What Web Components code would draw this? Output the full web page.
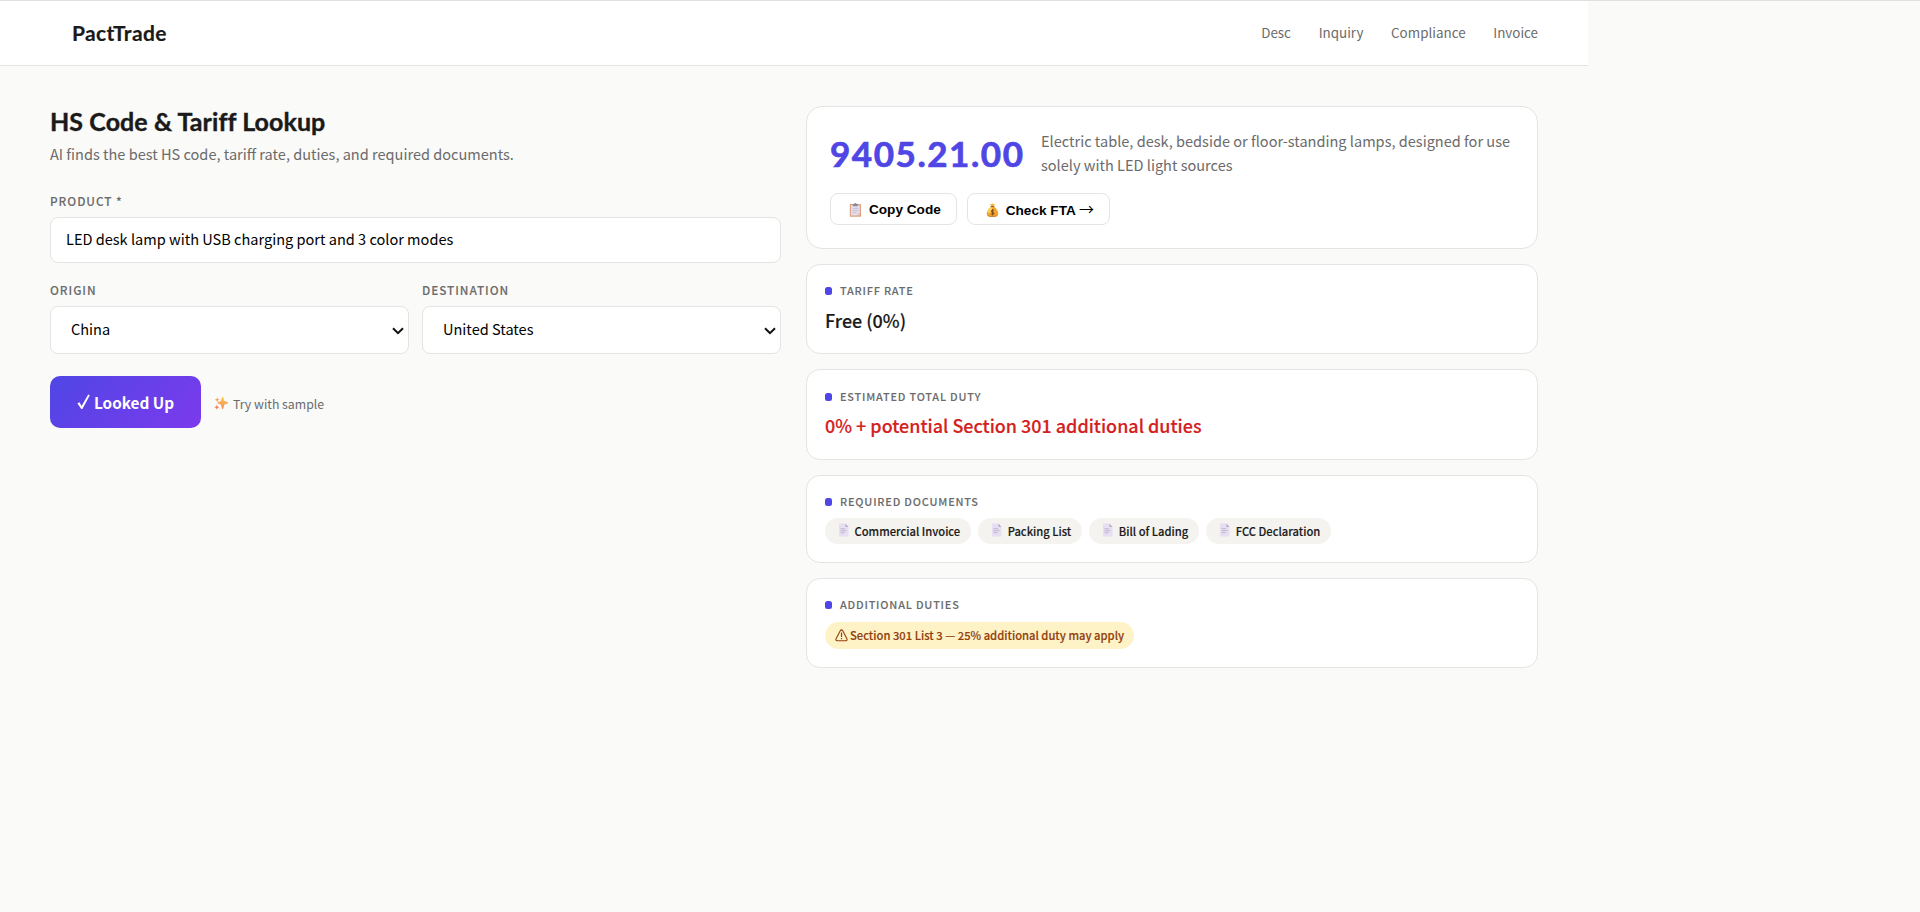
<!DOCTYPE html>
<html lang="en">
<head>
<meta charset="utf-8">
<title>PactTrade</title>
<style>
    body {
        margin: 0;
        min-height: 100vh;
        box-sizing: border-box;
        border-top: 1px solid #e0e0de;
        background: #fafaf8;
        color: #1a1a1a;
        font-family: "Noto Sans CJK SC", "Open Sans", sans-serif;
        font-size: 14.56px;
        line-height: 24px;
    }
</style>
</head>
<body>
<trade-app></trade-app>

<script>
const define = (name, html) => {
    const template = document.createElement('template');
    template.innerHTML = html;
    customElements.define(name, class extends HTMLElement {
        constructor() {
            super();
            this.attachShadow({ mode: 'open' });
            this.shadowRoot.appendChild(template.content.cloneNode(true));
        }
    });
};

const icons = {
    check: '<svg viewBox="0 0 13 16"><path d="M0.4 9.3 2.4 8.2 4.6 12 11.2 0.6 12.8 1.3 5.4 15H4.2Z" fill="#fff"/></svg>',
    chevron: '<svg viewBox="0 0 12 8"><path d="M1 1.2 6 6.2 11 1.2" fill="none" stroke="#111" stroke-width="2"/></svg>',
    sparkles: `<svg viewBox="0 0 14 14">
        <defs><linearGradient id="g" x1="0" y1="0" x2="0" y2="1"><stop offset="0" stop-color="#fbc94a"/><stop offset="1" stop-color="#f58a5c"/></linearGradient></defs>
        <path d="M8.6 1 9.9 5.3 14 6.8 9.9 8.3 8.6 13 7.3 8.3 3.6 6.8 7.3 5.3Z" fill="url(#g)" stroke="url(#g)" stroke-linejoin="round"/>
        <path d="M3.2 1.2 3.9 3 5.6 3.7 3.9 4.4 3.2 6 2.5 4.4.8 3.7 2.5 3Z" fill="#f7a35a"/>
        <path d="M2.8 8.7 3.6 10.5 5.4 11.2 3.6 12 2.8 13.8 2 12 .2 11.2 2 10.5Z" fill="#f4835f"/></svg>`,
    clipboard: `<svg viewBox="0 0 12 14">
        <rect x=".3" y="1" width="11.2" height="12.8" rx=".6" fill="#dda080"/>
        <path d="M1.4 2.2h9v7.6L7.800 12.600H1.400Z" fill="#e2dced"/><path d="M10.400 9.800v2.800H7.800Z" fill="#f3c0a0"/>
        <path d="M3.500 1.100h1.300a1.100 1.100 0 0 1 2.200 0h1.300v2.200H3.500Z" fill="#8d8798"/>
        <path d="M3 5.600h6M3 7.600h6M3 9.600h4" stroke="#c5bdd2" stroke-width=".8"/></svg>`,
    money: `<svg viewBox="0 0 13 14">
        <path d="m4 .8 1.400.5L6.500.2l1.200 1.100L9 .8 8 3H5Z" fill="#f6b73c"/><path d="M4.800 3h3.500v1.100H4.800Z" fill="#9d5b2c"/>
        <path d="M4.800 4h3.500c2 1.500 4 4 4 6.500 0 2.400-1.600 3.300-5.800 3.300S.7 12.900.7 10.500C.7 8 2.800 5.500 4.800 4Z" fill="#f1a52f"/>
        <path d="M1.500 8.500C2.300 6.500 3.500 5 5.200 4.200c1.500 1 1.800 3-.2 4.800s-3 1-3.500-.5Z" fill="#ffd056"/>
        <path d="M1 12c2.600 1.200 8.600 1.200 11 0-.7 1.400-2.400 1.800-5.500 1.800S1.600 13.400 1 12Z" fill="#c7712d"/>
        <path d="M8 7.600C7.700 7 5.200 6.800 5.200 8.200S8 9 8 10.400 5.500 11.400 5 10.600M6.600 6.300v6" fill="none" stroke="#75451c" stroke-width="1"/></svg>`,
    page: `<svg viewBox="0 0 10 14">
        <path d="M0 .5h6.500L9.500 4v9.500H0Z" fill="#e6def1"/><path d="M6.500.5 9.500 4h-3Z" fill="#b8acc6"/>
        <path d="M1.500 5.700H6M1.500 7.700h6M1.500 9.700h4" stroke="#c0b4cf" stroke-width="1"/></svg>`,
    warning: `<svg viewBox="0 0 13 13" fill="none" stroke="#92400e">
        <path d="M6.500.9c.5 0 .8.2 1.100.7l4.300 8.200c.6 1.100 0 1.900-1.100 1.900H2.200c-1.100 0-1.700-.8-1.100-1.900l4.300-8.200c.3-.5.600-.7 1.100-.7Z" stroke-width="1.100"/>
        <path d="M6.500 3.600v4.300M6.500 9v1.300" stroke-width="1.200"/></svg>`,
};

class UiIcon extends HTMLElement {
    constructor() {
        super();
        this.attachShadow({ mode: 'open' });
    }

    connectedCallback() {
        this.shadowRoot.innerHTML = `
          <style>
            :host { display: inline-block; flex: none; line-height: 0; }
            svg { display: block; width: 100%; height: 100%; }
          </style>
          ${icons[this.getAttribute('name')]}
        `;
    }
}
customElements.define('ui-icon', UiIcon);

define('app-header', `
  <style>
    :host {
        display: flex;
        align-items: center;
        justify-content: space-between;
        box-sizing: border-box;
        width: 1588px;
        height: 65px;
        padding: 0 50px 0 72px;
        background: #fff;
        border-bottom: 1px solid #e4e4e2;
    }

    .logo {
        font: 700 21px/26px Lato, sans-serif;
        letter-spacing: 0.38px;
        -webkit-text-stroke: 0.2px;
    }

    nav {
        display: flex;
        gap: 27.7px;
        padding-bottom: 2px;
        color: #6b6b6b;
        font-size: 13.4px;
    }
  </style>
  <div class="logo">PactTrade</div>
  <nav><span>Desc</span><span>Inquiry</span><span>Compliance</span><span>Invoice</span></nav>
`);

define('form-field', `
  <style>
    :host { display: block; }

    .label {
        margin-bottom: 6px;
        color: #6b6b6b;
        font-size: 11.8px;
        font-weight: 500;
        line-height: 20px;
        letter-spacing: 0.95px;
        -webkit-text-stroke: 0.1px;
    }

    ::slotted(input) {
        display: block;
        box-sizing: border-box;
        width: 100%;
        height: 46px;
        margin: 0;
        padding: 0 15px 3px;
        border: 1px solid #e4e4e2;
        border-radius: 8px;
        background: #fff;
        color: #000;
        font-family: inherit;
        font-size: 14.56px;
        outline: none;
    }
  </style>
  <div class="label"><slot name="label"></slot></div>
  <slot></slot>
`);

define('select-box', `
  <style>
    :host {
        display: flex;
        align-items: center;
        justify-content: space-between;
        box-sizing: border-box;
        height: 48px;
        padding: 0 4px 0 20px;
        border: 1px solid #e4e4e2;
        border-radius: 8px;
        background: #fff;
        color: #000;
    }

    .value { padding-bottom: 2px; }
    ui-icon { width: 12px; height: 8px; margin-top: 2px; }
  </style>
  <div class="value"><slot></slot></div>
  <ui-icon name="chevron"></ui-icon>
`);

define('primary-button', `
  <style>
    :host {
        display: inline-flex;
        align-items: center;
        box-sizing: border-box;
        width: 151px;
        height: 52px;
        padding: 0 0 0 27px;
        border-radius: 10px;
        background: linear-gradient(135deg, #4f46e5, #7c3aed);
        color: #fff;
        font-size: 15.3px;
        font-weight: 700;
    }

    ui-icon { width: 13px; height: 16px; margin: 0 4px 1px 0; }
  </style>
  <ui-icon name="check"></ui-icon><slot></slot>
`);

define('lookup-form', `
  <style>
    :host { display: block; }

    h1 {
        margin: 0 0 5px;
        font: 700 25px/31px Lato, sans-serif;
        letter-spacing: 0.08px;
        -webkit-text-stroke: 0.4px;
    }

    p { margin: 0 0 25px; color: #6b6b6b; }

    .pair {
        display: grid;
        grid-template-columns: 1fr 1fr;
        gap: 13px;
        margin: 17px 0 22px;
    }

    .actions { display: flex; align-items: center; gap: 13px; }

    .sample {
        display: flex;
        align-items: center;
        gap: 5px;
        padding-top: 3px;
        color: #6b6b6b;
        font-size: 12.3px;
    }

    .sample ui-icon { width: 14px; height: 14px; margin-bottom: 1px; }
  </style>
  <h1>HS Code &amp; Tariff Lookup</h1>
  <p>AI finds the best HS code, tariff rate, duties, and required documents.</p>
  <form-field><span slot="label">PRODUCT *</span><input value="LED desk lamp with USB charging port and 3 color modes"></form-field>
  <div class="pair">
    <form-field><span slot="label">ORIGIN</span><select-box>China</select-box></form-field>
    <form-field><span slot="label">DESTINATION</span><select-box>United States</select-box></form-field>
  </div>
  <div class="actions">
    <primary-button><span>Looked Up</span></primary-button>
    <div class="sample"><ui-icon name="sparkles"></ui-icon><span>Try with sample</span></div>
  </div>
`);

define('small-button', `
  <style>
    :host {
        display: flex;
        align-items: center;
        box-sizing: border-box;
        height: 32px;
        border: 1px solid #e4e4e2;
        border-radius: 8px;
        padding: 2px 15px 0 18px;
        background: #fff;
        color: #000;
        font: 700 13.6px/20px "Liberation Sans", Arial, sans-serif;
    }

    ::slotted(ui-icon) { width: 13px; height: 14px; margin-right: 7px; }
  </style>
  <slot></slot>
`);

define('code-card', `
  <style>
    :host {
        display: block;
        box-sizing: border-box;
        height: 143px;
        padding: 22px 23px;
        border: 1px solid #e4e4e2;
        border-radius: 16px;
        background: #fff;
    }

    .top { display: flex; gap: 17px; height: 48px; margin-bottom: 16px; }

    .code {
        flex: none;
        width: 194px;
        color: #4f46e5;
        font: 700 35px/48px Lato, sans-serif;
        letter-spacing: 1.55px;
        white-space: nowrap;
        -webkit-text-stroke: 0.7px;
    }

    .text { color: #6b6b6b; white-space: nowrap; }

    .buttons { display: flex; gap: 10px; }

    .arrow { font: 400 15px/20px "Noto Sans CJK SC", sans-serif; }
  </style>
  <div class="top">
    <div class="code">9405.21.00</div>
    <div class="text">Electric table, desk, bedside or floor-standing lamps, designed for use<br>solely with LED light sources</div>
  </div>
  <div class="buttons">
    <small-button><ui-icon name="clipboard"></ui-icon><span>Copy Code</span></small-button>
    <small-button><ui-icon name="money"></ui-icon><span>Check FTA <span class="arrow">→</span></span></small-button>
  </div>
`);

define('result-card', `
  <style>
    :host {
        display: block;
        box-sizing: border-box;
        height: 91px;
        padding: 16px 18px;
        border: 1px solid #e4e4e2;
        border-radius: 14px;
        background: #fff;
    }

    .label {
        display: flex;
        align-items: center;
        gap: 8px;
        color: #6b6b6b;
        font-size: 10.9px;
        font-weight: 500;
        line-height: 18px;
        letter-spacing: 0.82px;
        -webkit-text-stroke: 0.1px;
    }

    .label::before {
        content: '';
        width: 7px;
        height: 8px;
        margin-top: 1px;
        border-radius: 2.5px;
        background: #4f46e5;
    }

    .body {
        display: flex;
        gap: 7.6px;
        margin-top: var(--body-gap, 7px);
        font-size: 17.95px;
        font-weight: 500;
        line-height: 28px;
        -webkit-text-stroke: 0.15px;
    }
  </style>
  <div class="label"><slot name="label"></slot></div>
  <div class="body"><slot></slot></div>
`);

define('doc-chip', `
  <style>
    :host {
        display: flex;
        align-items: center;
        height: 26px;
        padding: 0 10.4px 0 14px;
        border-radius: 13px;
        background: #f5f3f0;
        color: #1a1a1a;
        font-size: 11.2px;
        line-height: 25px;
    }

    ui-icon { width: 10px; height: 14px; margin: 0 5.5px 2px 0; }
  </style>
  <ui-icon name="page"></ui-icon><slot></slot>
`);

define('duty-pill', `
  <style>
    :host {
        display: flex;
        align-items: center;
        height: 27px;
        padding: 0 10px;
        border-radius: 14px;
        background: #fef3c7;
        color: #92400e;
        font-size: 11.23px;
        line-height: 27px;
    }

    ui-icon { width: 13px; height: 13px; margin: 0 2px 1px 0; }
  </style>
  <ui-icon name="warning"></ui-icon><slot></slot>
`);

define('trade-app', `
  <style>
    :host { display: block; }

    main {
        display: grid;
        grid-template-columns: 731px 732px;
        gap: 25px;
        box-sizing: border-box;
        width: 1588px;
        padding: 40px 50px;
    }

    .results { display: flex; flex-direction: column; gap: 15px; }
    .rate { height: 90px; }
    .total { padding-top: 17px; --body-gap: 6px; }
    .docs { height: 88px; --body-gap: 8px; }
    .extra { height: 90px; --body-gap: 9px; }
    .duty { color: #d42020; }
  </style>
  <app-header></app-header>
  <main>
    <lookup-form></lookup-form>
    <div class="results">
      <code-card></code-card>
      <result-card class="rate"><span slot="label">TARIFF RATE</span><span>Free (0%)</span></result-card>
      <result-card class="total"><span slot="label">ESTIMATED TOTAL DUTY</span><span class="duty">0% + potential Section 301 additional duties</span></result-card>
      <result-card class="docs">
        <span slot="label">REQUIRED DOCUMENTS</span>
        <doc-chip><span>Commercial Invoice</span></doc-chip>
        <doc-chip><span>Packing List</span></doc-chip>
        <doc-chip><span>Bill of Lading</span></doc-chip>
        <doc-chip><span>FCC Declaration</span></doc-chip>
      </result-card>
      <result-card class="extra">
        <span slot="label">ADDITIONAL DUTIES</span>
        <duty-pill><span>Section 301 List 3 — 25% additional duty may apply</span></duty-pill>
      </result-card>
    </div>
  </main>
`);
</script>
</body>
</html>
